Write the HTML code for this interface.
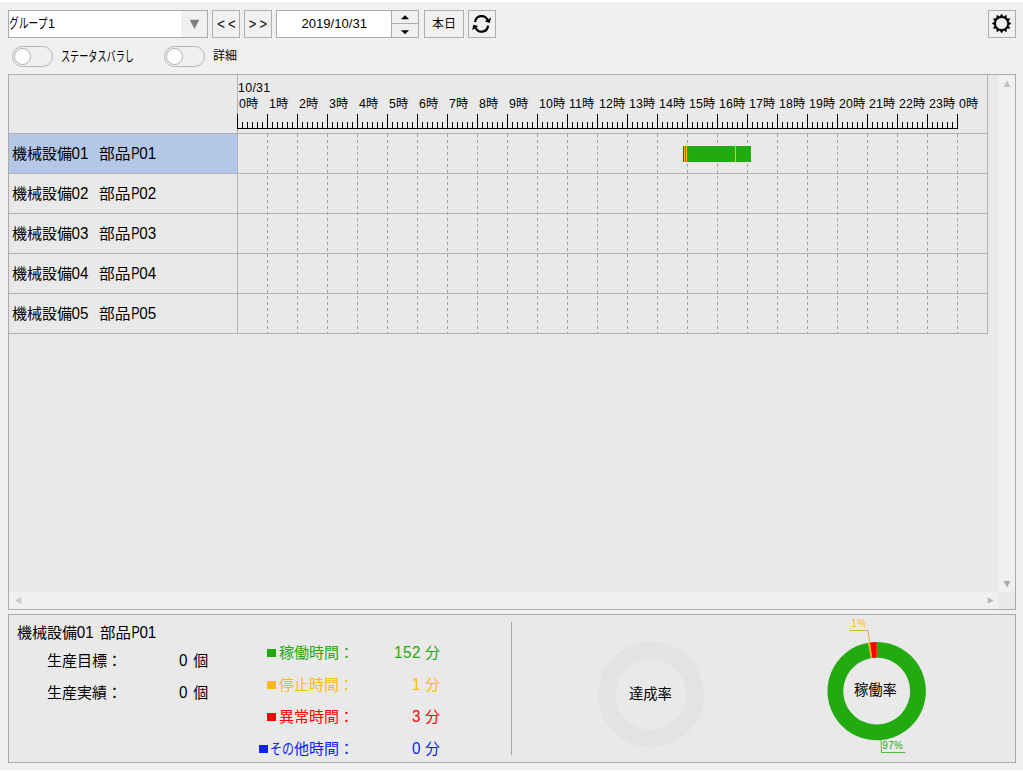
<!DOCTYPE html>
<html lang="ja">
<head>
<meta charset="utf-8">
<title>稼働モニタ</title>
<style>
html,body{margin:0;padding:0}
body{width:1023px;height:771px;overflow:hidden;background:#f0f0f0;font-family:"Liberation Sans","Noto Sans CJK JP",sans-serif;font-size:12px;color:#000}
#app{position:relative;width:1023px;height:771px;overflow:hidden;background:#f0f0f0;box-shadow:inset 0 2px 0 #fff,inset 0 -1px 0 #fff}
#app *{position:absolute;box-sizing:border-box}
#app svg.t{overflow:visible}
#app svg *{position:static}
text{font-family:"Liberation Sans","Noto Sans CJK JP",sans-serif}
.panel{border:1px solid #ababab;background:#e9e9e9}
.sb{background:#f0f0f0}
.hl,.vl{background:#b2b2b2}
.grow{border-top:1px solid #b2b2b2}
.sel{background:#b4c7e7}
.sep{background:#a6a6a6}
.btn{border:1px solid #adadad;background:#f0f0f0;padding:0;margin:0;font:inherit;border-radius:0}
.lt{font-size:13px;letter-spacing:3.2px;line-height:15px;white-space:nowrap;transform:scaleY(1.14);transform-origin:0 60%}
.combo,.date{border:1px solid #ababab;background:#fff}
.dtxt{line-height:26.5px;text-align:center;font-size:13.1px;text-indent:-0.6px}
.spin{background:#f0f0f0;border-left:1px solid #ababab}
.tog{width:41px;height:21px;border:1px solid #b4b4b4;border-radius:10.5px;background:#f0f0f0}
.tog i{left:1px;top:1px;width:17px;height:17px;border:1px solid #adadad;border-radius:50%;background:#fff}
.pl{font-size:9.8px;line-height:10px;white-space:nowrap;letter-spacing:0.4px;transform:scaleY(1.06);transform-origin:0 100%}
</style>
</head>
<body>
<div id="app">
<!-- ===== toolbar ===== -->
<div class="toolbar" style="left:0px;top:2px;width:1023px;height:70px">
  <div class="combo" style="left:8px;top:8px;width:200px;height:28px" role="combobox" aria-label="グループ">
    <svg class="t" role="img" aria-label="グループ1" style="left:0.4px;top:3.2px" width="48.39" height="18.85" fill="#000"><title>グループ1</title><text x="0" y="14.3" font-size="13.6" textLength="38.5" lengthAdjust="spacingAndGlyphs" stroke="none">グループ</text><text x="38.88" y="13.8" font-size="12.6" stroke="none" xml:space="preserve">1</text></svg>
    <svg class="abs" style="left:172px;top:0px" width="26" height="26" viewBox="181 11 26 26"><rect x="181" y="11" width="26" height="26" fill="#f0f0f0"/><path d="M189.7 19.8h9.6l-4.8 9.2z" fill="#7f7f7f"/></svg>
  </div>
  <button class="btn" style="left:212px;top:8px;width:28px;height:28px" title="prev">
    <span class="lt" style="left:4.2px;top:6px">&lt;&lt;</span>
  </button>
  <button class="btn" style="left:244px;top:8px;width:28px;height:28px" title="next">
    <span class="lt" style="left:3.8px;top:6px">&gt;&gt;</span>
  </button>
  <div class="date" style="left:276px;top:8px;width:143px;height:28px">
    <span class="dtxt" style="left:0px;top:0px;width:115px;height:26px">2019/10/31</span>
    <div class="spin" style="left:114px;top:0px;width:27px;height:26px">
      <svg class="abs" style="left:0px;top:0px" width="26" height="26" viewBox="392 11 26 26"><path d="M392 23.5h26" stroke="#ababab" stroke-width="1"/><path d="M405 15.2l4 4h-8z M405 34.2l4-4h-8z" fill="#000"/></svg>
    </div>
  </div>
  <button class="btn" style="left:424px;top:8px;width:40px;height:28px">
    <svg class="t" role="img" aria-label="本日" style="left:6.6px;top:4.1px" width="26" height="17.4" fill="#000"><title>本日</title><text x="0" y="13.2" font-size="12" stroke="none">本日</text></svg>
  </button>
  <button class="btn" style="left:468px;top:8px;width:28px;height:28px" title="refresh">
    <svg class="abs" style="left:0px;top:0px" width="26" height="26" viewBox="469 11 26 26"><g fill="none" stroke="#000" stroke-width="2.3"><path d="M475.17 22.1A6.45 6.45 0 0 1 487.58 20.13"/><path d="M488.03 25.6A6.45 6.45 0 0 1 475.62 27.57"/></g><path d="M491 17.5L489.9 23L484.9 21.6z M472.2 30.2L473.3 24.7L478.3 26.1z" fill="#000"/></svg>
  </button>
  <button class="btn" style="left:988px;top:8px;width:28px;height:28px" title="settings">
    <svg class="abs" style="left:0px;top:0px" width="26" height="26" viewBox="989 11 26 26"><path d="M1001.6 14.05L999.79 16.74L996.88 15.32L996.65 18.55L993.42 18.78L994.84 21.69L992.15 23.5L994.84 25.31L993.42 28.23L996.65 28.45L996.88 31.68L999.79 30.26L1001.6 32.95L1003.41 30.26L1006.33 31.68L1006.55 28.45L1009.78 28.23L1008.36 25.31L1011.05 23.5L1008.36 21.69L1009.78 18.77L1006.55 18.55L1006.33 15.32L1003.41 16.74zM995.75 23.5a5.85 5.85 0 1 0 11.7 0a5.85 5.85 0 1 0 -11.7 0z" fill="#000" fill-rule="evenodd" stroke="#000" stroke-width="0.5" stroke-linejoin="round"/></svg>
  </button>
  <label class="sw" style="left:12px;top:44px;width:125px;height:21px">
    <span class="tog" style="left:0px;top:0px"><i></i></span>
    <svg class="t" role="img" aria-label="ステータスバラし" style="left:48.5px;top:1.6px" width="73.89" height="17.4" fill="#000"><title>ステータスバラし</title><text x="0" y="13.2" font-size="14" textLength="73" lengthAdjust="spacingAndGlyphs" stroke="none">ステータスバラし</text></svg>
  </label>
  <label class="sw" style="left:164px;top:44px;width:76px;height:21px">
    <span class="tog" style="left:0px;top:0px"><i></i></span>
    <svg class="t" role="img" aria-label="詳細" style="left:48.9px;top:1px" width="26" height="17.4" fill="#000"><title>詳細</title><text x="0" y="13.2" font-size="12" stroke="none">詳細</text></svg>
  </label>
</div>
<!-- ===== gantt chart ===== -->
<div class="panel" style="left:8px;top:74px;width:1008px;height:536px">
  <div class="sb" style="left:989px;top:0px;width:17px;height:517px">
    <svg class="abs" style="left:5px;top:5px" width="8" height="8" viewBox="1003 80 8 8"><path d="M1007 80.5L1010.3 87H1003.7z" fill="#bdbdbd"/></svg>
    <svg class="abs" style="left:5px;top:506px" width="8" height="8" viewBox="1003 581 8 8"><path d="M1003.7 581H1010.3L1007 587.5z" fill="#a6a6a6"/></svg>
  </div>
  <div class="sb" style="left:0px;top:517px;width:989px;height:17px">
    <svg class="abs" style="left:5.5px;top:5px" width="8" height="8" viewBox="14.5 597 8 8"><path d="M14.8 600.5L20.8 597.3V603.7z" fill="#c4c4c4"/></svg>
    <svg class="abs" style="left:977.5px;top:5px" width="8" height="8" viewBox="986.5 597 8 8"><path d="M993.2 600.5L987.2 597.3V603.7z" fill="#b4b4b4"/></svg>
  </div>
  <div class="grid" style="left:0px;top:0px;width:979px;height:259px">
    <div class="vl" style="left:228px;top:0px;width:1px;height:258px"></div>
    <div class="vl" style="left:978px;top:0px;width:1px;height:259px"></div>
    <div class="hl" style="left:0px;top:258px;width:979px;height:1px"></div>
    <div class="ghead" style="left:0px;top:0px;width:979px;height:58px">
      <svg class="t" role="img" aria-label="10/31" style="left:229.4px;top:4.1px" width="34.52" height="17.4" fill="#000"><title>10/31</title><text x="0" y="13.2" font-size="12.4" letter-spacing="0.3" stroke="none" xml:space="preserve">10/31</text></svg>
      <svg class="t" role="img" aria-label="0時" style="left:229.7px;top:19.8px" width="20.51" height="17.4" fill="#000"><title>0時</title><text x="0" y="13.2" font-size="12.4" letter-spacing="0.1" stroke="none" xml:space="preserve">0時</text></svg>
      <svg class="t" role="img" aria-label="1時" style="left:259.7px;top:19.8px" width="20.51" height="17.4" fill="#000"><title>1時</title><text x="0" y="13.2" font-size="12.4" letter-spacing="0.1" stroke="none" xml:space="preserve">1時</text></svg>
      <svg class="t" role="img" aria-label="2時" style="left:289.7px;top:19.8px" width="20.51" height="17.4" fill="#000"><title>2時</title><text x="0" y="13.2" font-size="12.4" letter-spacing="0.1" stroke="none" xml:space="preserve">2時</text></svg>
      <svg class="t" role="img" aria-label="3時" style="left:319.7px;top:19.8px" width="20.51" height="17.4" fill="#000"><title>3時</title><text x="0" y="13.2" font-size="12.4" letter-spacing="0.1" stroke="none" xml:space="preserve">3時</text></svg>
      <svg class="t" role="img" aria-label="4時" style="left:349.7px;top:19.8px" width="20.51" height="17.4" fill="#000"><title>4時</title><text x="0" y="13.2" font-size="12.4" letter-spacing="0.1" stroke="none" xml:space="preserve">4時</text></svg>
      <svg class="t" role="img" aria-label="5時" style="left:379.7px;top:19.8px" width="20.51" height="17.4" fill="#000"><title>5時</title><text x="0" y="13.2" font-size="12.4" letter-spacing="0.1" stroke="none" xml:space="preserve">5時</text></svg>
      <svg class="t" role="img" aria-label="6時" style="left:409.7px;top:19.8px" width="20.51" height="17.4" fill="#000"><title>6時</title><text x="0" y="13.2" font-size="12.4" letter-spacing="0.1" stroke="none" xml:space="preserve">6時</text></svg>
      <svg class="t" role="img" aria-label="7時" style="left:439.7px;top:19.8px" width="20.51" height="17.4" fill="#000"><title>7時</title><text x="0" y="13.2" font-size="12.4" letter-spacing="0.1" stroke="none" xml:space="preserve">7時</text></svg>
      <svg class="t" role="img" aria-label="8時" style="left:469.7px;top:19.8px" width="20.51" height="17.4" fill="#000"><title>8時</title><text x="0" y="13.2" font-size="12.4" letter-spacing="0.1" stroke="none" xml:space="preserve">8時</text></svg>
      <svg class="t" role="img" aria-label="9時" style="left:499.7px;top:19.8px" width="20.51" height="17.4" fill="#000"><title>9時</title><text x="0" y="13.2" font-size="12.4" letter-spacing="0.1" stroke="none" xml:space="preserve">9時</text></svg>
      <svg class="t" role="img" aria-label="10時" style="left:529.7px;top:19.8px" width="27.51" height="17.4" fill="#000"><title>10時</title><text x="0" y="13.2" font-size="12.4" letter-spacing="0.1" stroke="none" xml:space="preserve">10時</text></svg>
      <svg class="t" role="img" aria-label="11時" style="left:559.7px;top:19.8px" width="27.51" height="17.4" fill="#000"><title>11時</title><text x="0" y="13.2" font-size="12.4" letter-spacing="0.1" stroke="none" xml:space="preserve">11時</text></svg>
      <svg class="t" role="img" aria-label="12時" style="left:589.7px;top:19.8px" width="27.51" height="17.4" fill="#000"><title>12時</title><text x="0" y="13.2" font-size="12.4" letter-spacing="0.1" stroke="none" xml:space="preserve">12時</text></svg>
      <svg class="t" role="img" aria-label="13時" style="left:619.7px;top:19.8px" width="27.51" height="17.4" fill="#000"><title>13時</title><text x="0" y="13.2" font-size="12.4" letter-spacing="0.1" stroke="none" xml:space="preserve">13時</text></svg>
      <svg class="t" role="img" aria-label="14時" style="left:649.7px;top:19.8px" width="27.51" height="17.4" fill="#000"><title>14時</title><text x="0" y="13.2" font-size="12.4" letter-spacing="0.1" stroke="none" xml:space="preserve">14時</text></svg>
      <svg class="t" role="img" aria-label="15時" style="left:679.7px;top:19.8px" width="27.51" height="17.4" fill="#000"><title>15時</title><text x="0" y="13.2" font-size="12.4" letter-spacing="0.1" stroke="none" xml:space="preserve">15時</text></svg>
      <svg class="t" role="img" aria-label="16時" style="left:709.7px;top:19.8px" width="27.51" height="17.4" fill="#000"><title>16時</title><text x="0" y="13.2" font-size="12.4" letter-spacing="0.1" stroke="none" xml:space="preserve">16時</text></svg>
      <svg class="t" role="img" aria-label="17時" style="left:739.7px;top:19.8px" width="27.51" height="17.4" fill="#000"><title>17時</title><text x="0" y="13.2" font-size="12.4" letter-spacing="0.1" stroke="none" xml:space="preserve">17時</text></svg>
      <svg class="t" role="img" aria-label="18時" style="left:769.7px;top:19.8px" width="27.51" height="17.4" fill="#000"><title>18時</title><text x="0" y="13.2" font-size="12.4" letter-spacing="0.1" stroke="none" xml:space="preserve">18時</text></svg>
      <svg class="t" role="img" aria-label="19時" style="left:799.7px;top:19.8px" width="27.51" height="17.4" fill="#000"><title>19時</title><text x="0" y="13.2" font-size="12.4" letter-spacing="0.1" stroke="none" xml:space="preserve">19時</text></svg>
      <svg class="t" role="img" aria-label="20時" style="left:829.7px;top:19.8px" width="27.51" height="17.4" fill="#000"><title>20時</title><text x="0" y="13.2" font-size="12.4" letter-spacing="0.1" stroke="none" xml:space="preserve">20時</text></svg>
      <svg class="t" role="img" aria-label="21時" style="left:859.7px;top:19.8px" width="27.51" height="17.4" fill="#000"><title>21時</title><text x="0" y="13.2" font-size="12.4" letter-spacing="0.1" stroke="none" xml:space="preserve">21時</text></svg>
      <svg class="t" role="img" aria-label="22時" style="left:889.7px;top:19.8px" width="27.51" height="17.4" fill="#000"><title>22時</title><text x="0" y="13.2" font-size="12.4" letter-spacing="0.1" stroke="none" xml:space="preserve">22時</text></svg>
      <svg class="t" role="img" aria-label="23時" style="left:919.7px;top:19.8px" width="27.51" height="17.4" fill="#000"><title>23時</title><text x="0" y="13.2" font-size="12.4" letter-spacing="0.1" stroke="none" xml:space="preserve">23時</text></svg>
      <svg class="t" role="img" aria-label="0時" style="left:949.7px;top:19.8px" width="20.51" height="17.4" fill="#000"><title>0時</title><text x="0" y="13.2" font-size="12.4" letter-spacing="0.1" stroke="none" xml:space="preserve">0時</text></svg>
      <svg class="abs" style="left:228px;top:38px" width="722" height="17" viewBox="237 113 722 17"><path d="M237 128.5H958M237.5 114V129M242.5 122V129M247.5 122V129M252.5 122V129M257.5 122V129M262.5 122V129M267.5 114V129M272.5 122V129M277.5 122V129M282.5 122V129M287.5 122V129M292.5 122V129M297.5 114V129M302.5 122V129M307.5 122V129M312.5 122V129M317.5 122V129M322.5 122V129M327.5 114V129M332.5 122V129M337.5 122V129M342.5 122V129M347.5 122V129M352.5 122V129M357.5 114V129M362.5 122V129M367.5 122V129M372.5 122V129M377.5 122V129M382.5 122V129M387.5 114V129M392.5 122V129M397.5 122V129M402.5 122V129M407.5 122V129M412.5 122V129M417.5 114V129M422.5 122V129M427.5 122V129M432.5 122V129M437.5 122V129M442.5 122V129M447.5 114V129M452.5 122V129M457.5 122V129M462.5 122V129M467.5 122V129M472.5 122V129M477.5 114V129M482.5 122V129M487.5 122V129M492.5 122V129M497.5 122V129M502.5 122V129M507.5 114V129M512.5 122V129M517.5 122V129M522.5 122V129M527.5 122V129M532.5 122V129M537.5 114V129M542.5 122V129M547.5 122V129M552.5 122V129M557.5 122V129M562.5 122V129M567.5 114V129M572.5 122V129M577.5 122V129M582.5 122V129M587.5 122V129M592.5 122V129M597.5 114V129M602.5 122V129M607.5 122V129M612.5 122V129M617.5 122V129M622.5 122V129M627.5 114V129M632.5 122V129M637.5 122V129M642.5 122V129M647.5 122V129M652.5 122V129M657.5 114V129M662.5 122V129M667.5 122V129M672.5 122V129M677.5 122V129M682.5 122V129M687.5 114V129M692.5 122V129M697.5 122V129M702.5 122V129M707.5 122V129M712.5 122V129M717.5 114V129M722.5 122V129M727.5 122V129M732.5 122V129M737.5 122V129M742.5 122V129M747.5 114V129M752.5 122V129M757.5 122V129M762.5 122V129M767.5 122V129M772.5 122V129M777.5 114V129M782.5 122V129M787.5 122V129M792.5 122V129M797.5 122V129M802.5 122V129M807.5 114V129M812.5 122V129M817.5 122V129M822.5 122V129M827.5 122V129M832.5 122V129M837.5 114V129M842.5 122V129M847.5 122V129M852.5 122V129M857.5 122V129M862.5 122V129M867.5 114V129M872.5 122V129M877.5 122V129M882.5 122V129M887.5 122V129M892.5 122V129M897.5 114V129M902.5 122V129M907.5 122V129M912.5 122V129M917.5 122V129M922.5 122V129M927.5 114V129M932.5 122V129M937.5 122V129M942.5 122V129M947.5 122V129M952.5 122V129M957.5 114V129" stroke="#000" stroke-width="1" fill="none" shape-rendering="crispEdges"/></svg>
    </div>
    <div class="grow" style="left:0px;top:58px;width:979px;height:41px">
      <div class="gname sel" style="left:0px;top:0px;width:228px;height:39px">
        <svg class="t" role="img" aria-label="機械設備01  部品P01" style="left:3px;top:8.1px" width="146.1" height="21.75" fill="#000"><title>機械設備01  部品P01</title><text x="0" y="16.5" font-size="15" stroke="none">機械設備</text><text transform="translate(59.6 16.5) scale(1 1.08)" font-size="15.2" stroke="none" xml:space="preserve">01  </text><text transform="translate(87 16.5) scale(1.05 1)" font-size="15" stroke="none">部品</text><text transform="translate(119.2 16.5) scale(0.82 1.08)" font-size="15.2" stroke="none" xml:space="preserve">P</text><text transform="translate(127.2 16.5) scale(1 1.08)" font-size="15.2" stroke="none" xml:space="preserve">01</text></svg>
      </div>
    </div>
    <div class="grow" style="left:0px;top:98px;width:979px;height:41px">
      <div class="gname" style="left:0px;top:0px;width:228px;height:39px">
        <svg class="t" role="img" aria-label="機械設備02  部品P02" style="left:3px;top:8.1px" width="146.1" height="21.75" fill="#000"><title>機械設備02  部品P02</title><text x="0" y="16.5" font-size="15" stroke="none">機械設備</text><text transform="translate(59.6 16.5) scale(1 1.08)" font-size="15.2" stroke="none" xml:space="preserve">02  </text><text transform="translate(87 16.5) scale(1.05 1)" font-size="15" stroke="none">部品</text><text transform="translate(119.2 16.5) scale(0.82 1.08)" font-size="15.2" stroke="none" xml:space="preserve">P</text><text transform="translate(127.2 16.5) scale(1 1.08)" font-size="15.2" stroke="none" xml:space="preserve">02</text></svg>
      </div>
    </div>
    <div class="grow" style="left:0px;top:138px;width:979px;height:41px">
      <div class="gname" style="left:0px;top:0px;width:228px;height:39px">
        <svg class="t" role="img" aria-label="機械設備03  部品P03" style="left:3px;top:8.1px" width="146.1" height="21.75" fill="#000"><title>機械設備03  部品P03</title><text x="0" y="16.5" font-size="15" stroke="none">機械設備</text><text transform="translate(59.6 16.5) scale(1 1.08)" font-size="15.2" stroke="none" xml:space="preserve">03  </text><text transform="translate(87 16.5) scale(1.05 1)" font-size="15" stroke="none">部品</text><text transform="translate(119.2 16.5) scale(0.82 1.08)" font-size="15.2" stroke="none" xml:space="preserve">P</text><text transform="translate(127.2 16.5) scale(1 1.08)" font-size="15.2" stroke="none" xml:space="preserve">03</text></svg>
      </div>
    </div>
    <div class="grow" style="left:0px;top:178px;width:979px;height:41px">
      <div class="gname" style="left:0px;top:0px;width:228px;height:39px">
        <svg class="t" role="img" aria-label="機械設備04  部品P04" style="left:3px;top:8.1px" width="146.1" height="21.75" fill="#000"><title>機械設備04  部品P04</title><text x="0" y="16.5" font-size="15" stroke="none">機械設備</text><text transform="translate(59.6 16.5) scale(1 1.08)" font-size="15.2" stroke="none" xml:space="preserve">04  </text><text transform="translate(87 16.5) scale(1.05 1)" font-size="15" stroke="none">部品</text><text transform="translate(119.2 16.5) scale(0.82 1.08)" font-size="15.2" stroke="none" xml:space="preserve">P</text><text transform="translate(127.2 16.5) scale(1 1.08)" font-size="15.2" stroke="none" xml:space="preserve">04</text></svg>
      </div>
    </div>
    <div class="grow" style="left:0px;top:218px;width:979px;height:41px">
      <div class="gname" style="left:0px;top:0px;width:228px;height:39px">
        <svg class="t" role="img" aria-label="機械設備05  部品P05" style="left:3px;top:8.1px" width="146.1" height="21.75" fill="#000"><title>機械設備05  部品P05</title><text x="0" y="16.5" font-size="15" stroke="none">機械設備</text><text transform="translate(59.6 16.5) scale(1 1.08)" font-size="15.2" stroke="none" xml:space="preserve">05  </text><text transform="translate(87 16.5) scale(1.05 1)" font-size="15" stroke="none">部品</text><text transform="translate(119.2 16.5) scale(0.82 1.08)" font-size="15.2" stroke="none" xml:space="preserve">P</text><text transform="translate(127.2 16.5) scale(1 1.08)" font-size="15.2" stroke="none" xml:space="preserve">05</text></svg>
      </div>
    </div>
    <svg class="abs" style="left:229px;top:59px" width="749" height="199" viewBox="238 134 749 199"><path d="M267.5 134V333M297.5 134V333M327.5 134V333M357.5 134V333M387.5 134V333M417.5 134V333M447.5 134V333M477.5 134V333M507.5 134V333M537.5 134V333M567.5 134V333M597.5 134V333M627.5 134V333M657.5 134V333M687.5 134V333M717.5 134V333M747.5 134V333M777.5 134V333M807.5 134V333M837.5 134V333M867.5 134V333M897.5 134V333M927.5 134V333M957.5 134V333" stroke="#a3a3a3" stroke-width="1" stroke-dasharray="3 3" fill="none" shape-rendering="crispEdges"/><g class="bar"><rect x="683" y="146" width="68" height="16" fill="#22aa11"/><rect x="683" y="146" width="1" height="16" fill="#ff0000"/><rect x="684" y="146" width="1" height="16" fill="#ffbb00"/><rect x="686" y="146" width="1" height="16" fill="#ffbb00"/><rect x="735" y="146" width="1" height="16" fill="#ffbb00"/></g></svg>
  </div>
</div>
<!-- ===== detail panel ===== -->
<div class="panel" style="left:8px;top:614px;width:1008px;height:149px">
  <svg class="t" role="img" aria-label="機械設備01 部品P01" style="left:7.8px;top:6.1px" width="141.3" height="21.75" fill="#000"><title>機械設備01 部品P01</title><text x="0" y="16.5" font-size="15" stroke="none">機械設備</text><text transform="translate(59.8 16.5) scale(1 1.08)" font-size="15.2" stroke="none" xml:space="preserve">01 </text><text transform="translate(83 16.5) scale(1.03 1)" font-size="15" stroke="none">部品</text><text transform="translate(114.4 16.5) scale(0.82 1.08)" font-size="15.2" stroke="none" xml:space="preserve">P</text><text transform="translate(122.4 16.5) scale(1 1.08)" font-size="15.2" stroke="none" xml:space="preserve">01</text></svg>
  <svg class="t" role="img" aria-label="生産目標：" style="left:37.5px;top:34.1px" width="77" height="21.75" fill="#000"><title>生産目標：</title><text x="0" y="16.5" font-size="15" stroke="none">生産目標：</text></svg>
  <svg class="t" role="img" aria-label="0 個" style="left:169.9px;top:34.1px" width="31.3" height="21.75" fill="#000"><title>0 個</title><text transform="translate(0 17.1) scale(1 1.08)" font-size="15.2" stroke="none" xml:space="preserve">0 </text><text x="14.3" y="16.5" font-size="15" stroke="none">個</text></svg>
  <svg class="t" role="img" aria-label="生産実績：" style="left:37.5px;top:65.8px" width="77" height="21.75" fill="#000"><title>生産実績：</title><text x="0" y="16.5" font-size="15" stroke="none">生産実績：</text></svg>
  <svg class="t" role="img" aria-label="0 個" style="left:169.9px;top:65.8px" width="31.3" height="21.75" fill="#000"><title>0 個</title><text transform="translate(0 17.1) scale(1 1.08)" font-size="15.2" stroke="none" xml:space="preserve">0 </text><text x="14.3" y="16.5" font-size="15" stroke="none">個</text></svg>
  <i class="sq" style="left:258px;top:34px;width:9px;height:8px;background:#22aa11"></i>
  <svg class="t" role="img" aria-label="稼働時間：" style="left:270.2px;top:25.9px" width="77" height="21.75" fill="#22aa11"><title>稼働時間：</title><text x="0" y="16.5" font-size="15" stroke="none">稼働時間：</text></svg>
  <svg class="t" role="img" aria-label="152 分" style="left:371px;top:25.9px" width="61.9" height="21.75" fill="#22aa11"><title>152 分</title><text transform="translate(13.9 17.1) scale(1 1.08)" font-size="15.2" letter-spacing="0.55" stroke="none" xml:space="preserve">152 </text><text x="44.9" y="16.5" font-size="15" stroke="none">分</text></svg>
  <i class="sq" style="left:258px;top:66px;width:9px;height:8px;background:#ffbb00"></i>
  <svg class="t" role="img" aria-label="停止時間：" style="left:270.2px;top:57.9px" width="77" height="21.75" fill="#ffbb00"><title>停止時間：</title><text x="0" y="16.5" font-size="15" stroke="none">停止時間：</text></svg>
  <svg class="t" role="img" aria-label="1 分" style="left:371px;top:57.9px" width="61.9" height="21.75" fill="#ffbb00"><title>1 分</title><text transform="translate(31.9 17.1) scale(1 1.08)" font-size="15.2" letter-spacing="0.55" stroke="none" xml:space="preserve">1 </text><text x="44.9" y="16.5" font-size="15" stroke="none">分</text></svg>
  <i class="sq" style="left:258px;top:98px;width:9px;height:8px;background:#ff0000"></i>
  <svg class="t" role="img" aria-label="異常時間：" style="left:270.2px;top:90.2px" width="77" height="21.75" fill="#ff0000"><title>異常時間：</title><text x="0" y="16.5" font-size="15" stroke="none">異常時間：</text></svg>
  <svg class="t" role="img" aria-label="3 分" style="left:371px;top:90.2px" width="61.9" height="21.75" fill="#ff0000"><title>3 分</title><text transform="translate(31.9 17.1) scale(1 1.08)" font-size="15.2" letter-spacing="0.55" stroke="none" xml:space="preserve">3 </text><text x="44.9" y="16.5" font-size="15" stroke="none">分</text></svg>
  <i class="sq" style="left:250px;top:130px;width:9px;height:8px;background:#0a22ff"></i>
  <svg class="t" role="img" aria-label="その他時間：" style="left:261.2px;top:122.2px" width="86" height="21.75" fill="#0a22ff"><title>その他時間：</title><text transform="translate(0 16.5) scale(0.8 1)" font-size="15" stroke="none">その</text><text x="24" y="16.5" font-size="15" stroke="none">他時間：</text></svg>
  <svg class="t" role="img" aria-label="0 分" style="left:371px;top:122.2px" width="61.9" height="21.75" fill="#0a22ff"><title>0 分</title><text transform="translate(31.9 17.1) scale(1 1.08)" font-size="15.2" letter-spacing="0.55" stroke="none" xml:space="preserve">0 </text><text x="44.9" y="16.5" font-size="15" stroke="none">分</text></svg>
  <div class="sep" style="left:502px;top:7px;width:1px;height:133px"></div>
  <svg class="abs" style="left:587px;top:25px" width="110" height="110" viewBox="596 640 110 110"><circle cx="651" cy="694.5" r="44" fill="none" stroke="#e3e3e3" stroke-width="17.4"/></svg>
  <svg class="t" role="img" aria-label="達成率" style="left:619.6px;top:68.27px" width="44.9" height="20.73" fill="#000"><title>達成率</title><text x="0" y="15.73" font-size="14.3" stroke="none">達成率</text></svg>
  <svg class="abs" style="left:811px;top:1px" width="120" height="145" viewBox="820 616 120 145"><path d="M876.7 641.9A49.2 49.2 0 1 1 868.24 642.63L870.96 658.2A33.4 33.4 0 1 0 876.7 657.7z" fill="#22aa11"/><path d="M868.24 642.63A49.2 49.2 0 0 1 869.85 642.38L872.05 658.03A33.4 33.4 0 0 0 870.96 658.2z" fill="#ffbb00"/><path d="M869.85 642.38A49.2 49.2 0 0 1 876.7 641.9L876.7 657.7A33.4 33.4 0 0 0 872.05 658.03z" fill="#ff0000"/><path d="M849.5 630.5H868L871.8 657.5" stroke="#d9a51e" stroke-width="0.9" fill="none"/><path d="M881 740L881.5 752.5H905.5" stroke="#22aa11" stroke-width="0.9" stroke-opacity="0.85" fill="none"/></svg>
  <svg class="t" role="img" aria-label="稼働率" style="left:845.4px;top:64.07px" width="44.9" height="20.73" fill="#000"><title>稼働率</title><text x="0" y="15.73" font-size="14.3" stroke="none">稼働率</text></svg>
  <span class="pl" style="left:842.3px;top:3.7px;color:#ffbb00">1<span style="margin-left:0.2px">%</span></span>
  <span class="pl" style="left:873.3px;top:125.7px;color:#22aa11">97%</span>
</div>
</div>
</body>
</html>
